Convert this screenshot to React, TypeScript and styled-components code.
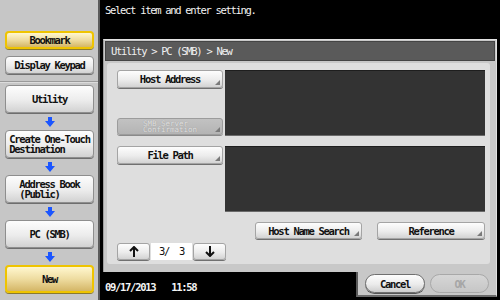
import React from 'react';
import styled, { createGlobalStyle, css } from 'styled-components';

const Global = createGlobalStyle`
  html, body { margin: 0; padding: 0; background: #000; }
  body { width: 500px; height: 300px; overflow: hidden; font-family: "DejaVu Sans Mono", "Liberation Mono", monospace; }
  * { box-sizing: border-box; }
`;

const mono = css`
  font-family: "DejaVu Sans Mono", "Liberation Mono", monospace;
  font-size: 10.5px;
  letter-spacing: -1.3px;
  white-space: pre;
`;

const Screen = styled.div`
  display: flex;
  width: 500px;
  height: 300px;
  background: #000;
`;

const Sidebar = styled.aside`
  width: 100px;
  height: 300px;
  background: #c6c6c6;
  border-right: 2px solid #5a5a5a;
  display: flex;
  flex-direction: column;
`;

const SideTop = styled.div`
  display: flex;
  flex-direction: column;
  gap: 7px;
  padding: 31px 4px 7px 5px;
  border-bottom: 1px solid #9a9a9a;
  box-shadow: 0 1px 0 #dcdcdc;
`;

const SideFlow = styled.div`
  display: flex;
  flex-direction: column;
  padding: 3px 4px 0 5px;
`;

const SideButton = styled.div<{ $active?: boolean; $tall?: boolean }>`
  ${mono};
  height: ${(p) => (p.$tall ? 28 : 18)}px;
  display: flex;
  align-items: center;
  justify-content: center;
  font-weight: bold;
  color: #111;
  line-height: 10px;
  border-radius: 4px;
  border: 1px solid #8e8e8e;
  background: linear-gradient(#fdfdfd, #ececec 55%, #d2d2d2);
  box-shadow: 0 1px 0 #6e6e6e;
  ${(p) =>
    p.$active &&
    css`
      border: 2px solid #efc400;
      background: linear-gradient(#fff7cf, #eedca0 50%, #d4b666);
      box-shadow: 0 1px 0 #8a7a30;
    `}
`;

const TwoLine = styled.span<{ $small?: boolean }>`
  display: inline-block;
  text-align: left;
  line-height: ${(p) => (p.$small ? 6 : 10)}px;
  ${(p) =>
    p.$small &&
    css`
      font-size: 7.5px;
      letter-spacing: 0px;
    `}
`;

const ArrowRow = styled.div`
  height: 17px;
  display: flex;
  align-items: center;
  justify-content: center;
`;

const Main = styled.main`
  flex: 1;
  display: flex;
  flex-direction: column;
  height: 300px;
`;

const Header = styled.div`
  ${mono};
  height: 39px;
  padding: 4px 5px;
  color: #f4f4f4;
`;

const Panel = styled.section`
  height: 233px;
  margin: 0 3px;
  background: #c8c8c8;
  border-top: 1px solid #e2e2e2;
  border-left: 1px solid #a0a0a0;
  border-right: 1px solid #e0e0e0;
  padding: 1px 1px 0;
  display: flex;
  flex-direction: column;
`;

const TitleBar = styled.div`
  ${mono};
  height: 20px;
  background: #5a5a5a;
  border: 1px solid #444;
  color: #f0f0f0;
  display: flex;
  align-items: center;
  padding-left: 5px;
`;

const Content = styled.div`
  flex: 1;
  margin: 2px 5px 8px 2px;
  background: #dedede;
  border-radius: 3px;
  padding: 7px 5px 0 10px;
  display: flex;
  flex-direction: column;
`;

const FieldRow = styled.div<{ $gapTop?: number }>`
  display: grid;
  grid-template-columns: 106px 1fr;
  column-gap: 2px;
  height: 66px;
  margin-top: ${(p) => p.$gapTop ?? 0}px;
`;

const LeftStack = styled.div`
  display: flex;
  flex-direction: column;
  justify-content: space-between;
  padding-bottom: 1px;
`;

const ValueBox = styled.div`
  background: #333333;
  border-top: 1px solid #1e1e1e;
  border-bottom: 1px solid #6a6a6a;
`;

const KeyButton = styled.div<{ $w?: number; $disabled?: boolean; $h?: number }>`
  ${mono};
  position: relative;
  width: ${(p) => (p.$w ? `${p.$w}px` : '100%')};
  height: ${(p) => p.$h ?? 17}px;
  display: flex;
  align-items: center;
  justify-content: center;
  font-weight: bold;
  color: #111;
  border: 1px solid #a4a4a4;
  border-radius: 3px;
  background: linear-gradient(#fdfdfd, #ececec 55%, #d3d3d3);
  box-shadow: 0 1px 0 #707070;
  &::after {
    content: '';
    position: absolute;
    right: 2px;
    bottom: 2px;
    border-style: solid;
    border-width: 0 0 5px 5px;
    border-color: transparent transparent #7a7a7a transparent;
  }
  ${(p) =>
    p.$disabled &&
    css`
      background: linear-gradient(#c2c2c2, #b4b4b4);
      border-color: #9c9c9c;
      color: #e2e2e2;
      box-shadow: 0 1px 0 #8a8a8a;
      font-weight: normal;
      text-shadow: 0 0 1px #8a8a8a;
      padding-top: 1px;
    `}
`;

const ActionRow = styled.div`
  display: flex;
  justify-content: flex-end;
  gap: 15px;
  margin-top: 10px;
`;

const PagerRow = styled.div`
  display: flex;
  align-items: center;
  gap: 1px;
  margin-top: 3px;
  height: 18px;
`;

const PagerButton = styled.div`
  width: 33px;
  height: 17px;
  display: flex;
  align-items: center;
  justify-content: center;
  border: 1px solid #a4a4a4;
  border-radius: 3px;
  background: linear-gradient(#fdfdfd, #ececec 55%, #d3d3d3);
  box-shadow: 0 1px 0 #707070;
`;

const PageField = styled.div`
  ${mono};
  width: 41px;
  height: 17px;
  background: #fff;
  color: #111;
  display: flex;
  align-items: center;
  justify-content: center;
`;

const BottomRow = styled.div`
  height: 28px;
  display: flex;
`;

const DateBar = styled.div`
  ${mono};
  width: 256px;
  background: #000;
  color: #f4f4f4;
  font-weight: bold;
  display: flex;
  align-items: center;
  gap: 16px;
  padding: 2px 0 0 5px;
`;

const Tray = styled.div`
  flex: 1;
  height: 25px;
  margin-right: 3px;
  background: #c8c8c8;
  border-left: 2px solid #5a5a5a;
  border-bottom: 2px solid #6a6a6a;
  border-right: 1px solid #e0e0e0;
  display: flex;
  gap: 5px;
  padding: 2px 0 0 7px;
`;

const PillButton = styled.div<{ $disabled?: boolean }>`
  ${mono};
  width: 60px;
  height: 19px;
  border-radius: 10px;
  display: flex;
  align-items: center;
  justify-content: center;
  font-weight: bold;
  color: #111;
  border: 1px solid #707070;
  background: linear-gradient(#fdfdfd, #ebebeb 55%, #cdcdcd);
  box-shadow: 0 1px 0 #555;
  ${(p) =>
    p.$disabled &&
    css`
      width: 59px;
      color: #a6a6a6;
      border-color: #a8a8a8;
      background: linear-gradient(#d6d6d6, #c6c6c6);
      box-shadow: none;
    `}
`;

const BlueArrow = () => (
  <svg width="10" height="10" viewBox="0 0 10 10">
    <polygon points="3,0 7,0 7,4 10,4 5,10 0,4 3,4" fill="#1a55ff" />
  </svg>
);

const BlackArrow = ({ up }: { up?: boolean }) => (
  <svg width="10" height="11" viewBox="0 0 10 11" style={up ? undefined : { transform: 'rotate(180deg)' }}>
    <path d="M5 1 L5 11 M1 5 L5 1 L9 5" stroke="#111" strokeWidth="2" fill="none" strokeLinejoin="miter" />
  </svg>
);

const flow: { label: React.ReactNode; active?: boolean }[] = [
  { label: 'Utility' },
  { label: <TwoLine>{'Create One-Touch\nDestination'}</TwoLine> },
  { label: <TwoLine>{'Address Book\n(Public)'}</TwoLine> },
  { label: 'PC (SMB)' },
  { label: 'New', active: true },
];

export default function App() {
  return (
    <>
      <Global />
      <Screen>
        <Sidebar>
          <SideTop>
            <SideButton $active>Bookmark</SideButton>
            <SideButton>Display Keypad</SideButton>
          </SideTop>
          <SideFlow>
            {flow.map((f, i) => (
              <React.Fragment key={i}>
                {i > 0 && (
                  <ArrowRow>
                    <BlueArrow />
                  </ArrowRow>
                )}
                <SideButton $tall $active={f.active}>
                  {f.label}
                </SideButton>
              </React.Fragment>
            ))}
          </SideFlow>
        </Sidebar>
        <Main>
          <Header>Select item and enter setting.</Header>
          <Panel>
            <TitleBar>{'Utility > PC (SMB) > New'}</TitleBar>
            <Content>
              <FieldRow>
                <LeftStack>
                  <KeyButton $h={18}>Host Address</KeyButton>
                  <KeyButton $disabled>
                    <TwoLine $small>{'SMB Server\nConfirmation'}</TwoLine>
                  </KeyButton>
                </LeftStack>
                <ValueBox />
              </FieldRow>
              <FieldRow $gapTop={10}>
                <LeftStack>
                  <KeyButton $h={18}>File Path</KeyButton>
                </LeftStack>
                <ValueBox />
              </FieldRow>
              <ActionRow>
                <KeyButton $w={107}>Host Name Search</KeyButton>
                <KeyButton $w={108}>Reference</KeyButton>
              </ActionRow>
              <PagerRow>
                <PagerButton>
                  <BlackArrow up />
                </PagerButton>
                <PageField>{'3/  3'}</PageField>
                <PagerButton>
                  <BlackArrow />
                </PagerButton>
              </PagerRow>
            </Content>
          </Panel>
          <BottomRow>
            <DateBar>
              <span>09/17/2013</span>
              <span>11:58</span>
            </DateBar>
            <Tray>
              <PillButton>Cancel</PillButton>
              <PillButton $disabled>OK</PillButton>
            </Tray>
          </BottomRow>
        </Main>
      </Screen>
    </>
  );
}
